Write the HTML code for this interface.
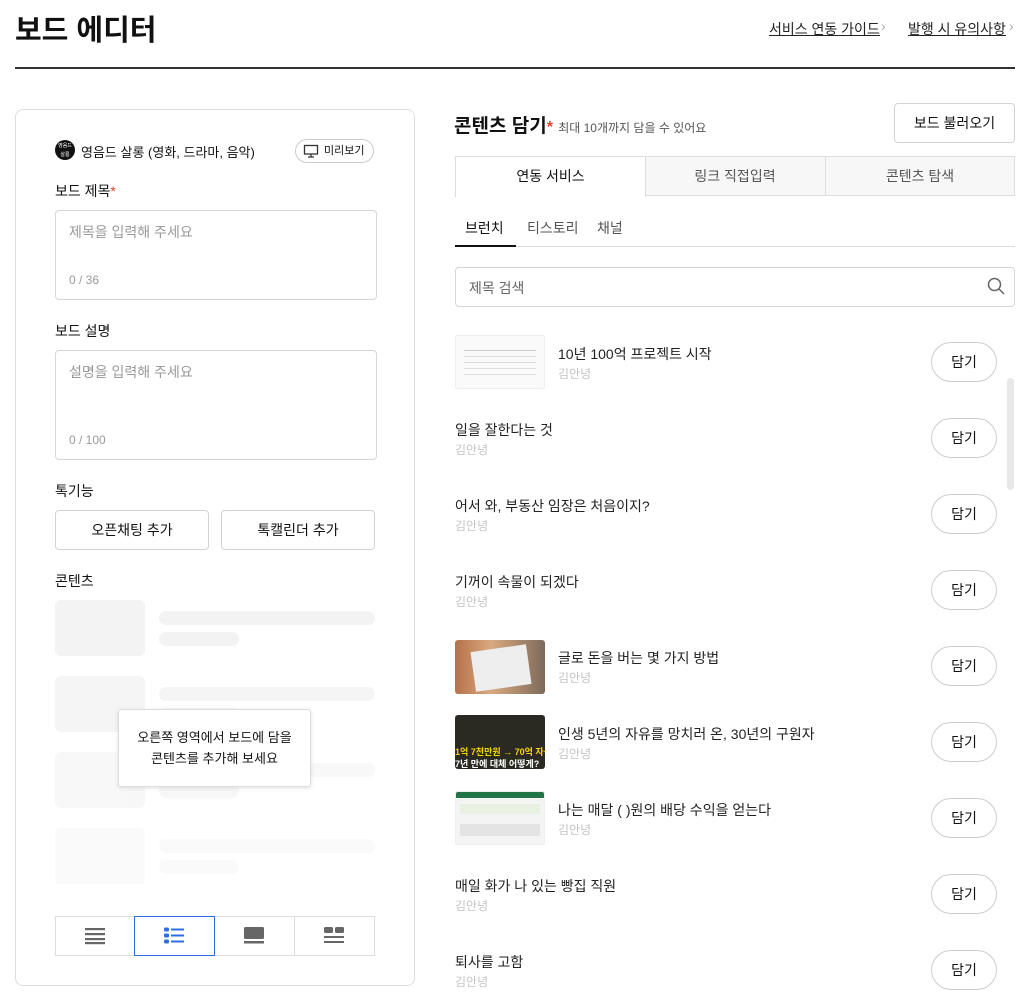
<!DOCTYPE html>
<html><head><meta charset="utf-8"><style>
*{box-sizing:border-box;margin:0;padding:0}
body{width:1024px;height:1006px;overflow:hidden;background:#fff;font-family:"Liberation Sans","Noto Sans CJK KR",sans-serif;color:#111;position:relative}
.a{position:absolute}
.sk{position:absolute;background:#f3f3f3;border-radius:6px}
.bar{position:absolute;background:#f3f3f3;border-radius:8px;height:14px}
.inp{position:absolute;border:1px solid #d6d6d6;border-radius:4px;background:#fff}
.btn{position:absolute;border:1px solid #d2d2d2;border-radius:4px;background:#fff;font-size:14px;text-align:center}
.dam{position:absolute;left:931px;width:66px;height:40px;border:1px solid #ccc;border-radius:20px;font-size:14px;text-align:center;line-height:38px}
.it{position:absolute;font-size:14px;color:#222}
.au{position:absolute;font-size:12px;color:#c4c4c4}
.th{position:absolute;left:455px;width:90px;height:54px;border-radius:3px;overflow:hidden}
</style></head><body>
<div class="a" style="left:15px;top:7px;font-size:29px;font-weight:bold">보드 에디터</div>
<div class="a" style="left:769px;top:19px;font-size:14px;text-decoration:underline;color:#222">서비스 연동 가이드</div>
<div class="a" style="left:881px;top:18px;font-size:14px;color:#aaa">›</div>
<div class="a" style="left:908px;top:19px;font-size:14px;text-decoration:underline;color:#222">발행 시 유의사항</div>
<div class="a" style="left:1009px;top:18px;font-size:14px;color:#aaa">›</div>
<div class="a" style="left:15px;top:67px;width:1000px;height:2px;background:#333"></div>

<div class="a" style="left:15px;top:109px;width:400px;height:877px;border:1px solid #ddd;border-radius:8px"></div>
<div class="a" style="left:55px;top:140px;width:20px;height:20px;border-radius:50%;background:#111;color:#fff;font-size:5px;text-align:center;line-height:9px;padding-top:2px">영음드<br>살롱</div>
<div class="a" style="left:81px;top:142px;font-size:13px">영음드 살롱 (영화, 드라마, 음악)</div>
<div class="a" style="left:295px;top:139px;width:79px;height:24px;border:1px solid #ccc;border-radius:12px;font-size:11px;line-height:22px;padding-left:28px">미리보기</div>
<svg class="a" style="left:303px;top:144px" width="16" height="14" viewBox="0 0 16 14"><rect x="1.5" y="1.5" width="13" height="8.5" fill="none" stroke="#333" stroke-width="1.3"/><path d="M8 10v3M5 13h6" stroke="#333" stroke-width="1.3"/></svg>
<div class="a" style="left:55px;top:181px;font-size:14px">보드 제목<span style="color:#e5412f">*</span></div>
<div class="inp" style="left:55px;top:210px;width:322px;height:90px"></div>
<div class="a" style="left:69px;top:222px;font-size:14px;color:#999">제목을 입력해 주세요</div>
<div class="a" style="left:69px;top:273px;font-size:12px;color:#999">0 / 36</div>
<div class="a" style="left:55px;top:321px;font-size:14px">보드 설명</div>
<div class="inp" style="left:55px;top:350px;width:322px;height:110px"></div>
<div class="a" style="left:69px;top:362px;font-size:14px;color:#999">설명을 입력해 주세요</div>
<div class="a" style="left:69px;top:433px;font-size:12px;color:#999">0 / 100</div>
<div class="a" style="left:55px;top:481px;font-size:14px">톡기능</div>
<div class="btn" style="left:55px;top:510px;width:154px;height:40px;line-height:38px">오픈채팅 추가</div>
<div class="btn" style="left:221px;top:510px;width:154px;height:40px;line-height:38px">톡캘린더 추가</div>
<div class="a" style="left:55px;top:571px;font-size:14px">콘텐츠</div>

<div class="sk" style="left:55px;top:600px;width:90px;height:56px"></div><div class="bar" style="left:159px;top:611px;width:216px"></div><div class="bar" style="left:159px;top:632px;width:80px"></div>
<div style="opacity:.8"><div class="sk" style="left:55px;top:676px;width:90px;height:56px"></div><div class="bar" style="left:159px;top:687px;width:216px"></div><div class="bar" style="left:159px;top:708px;width:80px"></div></div>
<div style="opacity:.6"><div class="sk" style="left:55px;top:752px;width:90px;height:56px"></div><div class="bar" style="left:159px;top:763px;width:216px"></div><div class="bar" style="left:159px;top:784px;width:80px"></div></div>
<div style="opacity:.4"><div class="sk" style="left:55px;top:828px;width:90px;height:56px"></div><div class="bar" style="left:159px;top:839px;width:216px"></div><div class="bar" style="left:159px;top:860px;width:80px"></div></div>
<div class="a" style="left:118px;top:709px;width:193px;height:78px;border:1px solid #ddd;border-radius:3px;background:#fff;box-shadow:0 1px 4px rgba(0,0,0,.12);font-size:13px;text-align:center;line-height:21px;padding-top:17px">오른쪽 영역에서 보드에 담을<br>콘텐츠를 추가해 보세요</div>

<div class="a" style="left:55px;top:916px;width:320px;height:40px;border:1px solid #ddd"></div>
<div class="a" style="left:134px;top:916px;width:1px;height:40px;background:#ddd"></div>
<div class="a" style="left:294px;top:916px;width:1px;height:40px;background:#ddd"></div>
<div class="a" style="left:134px;top:916px;width:81px;height:40px;border:1px solid #2d6fe0"></div>
<svg class="a" style="left:84px;top:926px" width="22" height="20"><g fill="#666"><rect x="1" y="2" width="20" height="2.2"/><rect x="1" y="7" width="20" height="2.2"/><rect x="1" y="12" width="20" height="2.2"/><rect x="1" y="16" width="20" height="2.2"/></g></svg>
<svg class="a" style="left:163px;top:926px" width="22" height="20"><g fill="#2d6fe0"><rect x="1" y="1.5" width="5" height="4" rx="1.5"/><rect x="1" y="7.5" width="5" height="4" rx="1.5"/><rect x="1" y="13.5" width="5" height="4" rx="1.5"/><rect x="8" y="2.5" width="13" height="2"/><rect x="8" y="8.5" width="13" height="2"/><rect x="8" y="14.5" width="13" height="2"/></g></svg>
<svg class="a" style="left:243px;top:926px" width="22" height="20"><g fill="#666"><rect x="1" y="1" width="20" height="12" rx="1.5"/><rect x="1" y="15" width="20" height="2.5"/></g></svg>
<svg class="a" style="left:323px;top:926px" width="22" height="20"><g fill="#666"><rect x="1" y="1" width="9" height="6" rx="1.5"/><rect x="12" y="1" width="9" height="6" rx="1.5"/><rect x="1" y="10" width="20" height="2"/><rect x="1" y="15" width="20" height="2"/></g></svg>

<div class="a" style="left:454px;top:111px;font-size:19px;font-weight:bold">콘텐츠 담기<span style="color:#e5412f;font-size:16px">*</span> <span style="font-size:12px;font-weight:normal;color:#555">최대 10개까지 담을 수 있어요</span></div>
<div class="btn" style="left:894px;top:103px;width:121px;height:40px;line-height:38px">보드 불러오기</div>
<div class="a" style="left:455px;top:156px;width:560px;height:40px;border-bottom:1px solid #ddd"></div>
<div class="a" style="left:645px;top:156px;width:370px;height:40px;background:#f7f7f7;border:1px solid #ddd"></div>
<div class="a" style="left:825px;top:156px;width:1px;height:40px;background:#ddd"></div>
<div class="a" style="left:455px;top:156px;width:191px;height:41px;background:#fff;border:1px solid #ddd;border-bottom:none;font-size:14px;text-align:center;line-height:38px">연동 서비스</div>
<div class="a" style="left:645px;top:156px;width:180px;font-size:14px;text-align:center;line-height:40px;color:#555">링크 직접입력</div>
<div class="a" style="left:825px;top:156px;width:190px;font-size:14px;text-align:center;line-height:40px;color:#555">콘텐츠 탐색</div>
<div class="a" style="left:455px;top:246px;width:560px;height:1px;background:#ddd"></div>
<div class="a" style="left:455px;top:245px;width:61px;height:2px;background:#111"></div>
<div class="a" style="left:465px;top:218px;font-size:14px">브런치</div>
<div class="a" style="left:527px;top:218px;font-size:14px;color:#555">티스토리</div>
<div class="a" style="left:597px;top:218px;font-size:14px;color:#555">채널</div>
<div class="inp" style="left:455px;top:267px;width:560px;height:40px"></div>
<div class="a" style="left:469px;top:278px;font-size:14px;color:#666">제목 검색</div>
<svg class="a" style="left:987px;top:277px" width="18" height="18"><circle cx="7.5" cy="7.5" r="6" fill="none" stroke="#666" stroke-width="1.5"/><path d="M12 12l5 5" stroke="#666" stroke-width="1.5"/></svg>
<div class="a" style="left:1007px;top:378px;width:7px;height:112px;background:#e8e8e8;border-radius:4px"></div>

<div class="th" style="top:335px;background:#fafafa;border:1px solid #eee"><div style="margin:14px 8px;height:1px;background:#ccc;box-shadow:0 6px #ddd,0 12px #ddd,0 18px #ddd,0 24px #ddd"></div></div>
<div class="it" style="left:558px;top:344px">10년 100억 프로젝트 시작</div><div class="au" style="left:558px;top:365px">김안녕</div><div class="dam" style="top:342px">담기</div>
<div class="it" style="left:455px;top:420px">일을 잘한다는 것</div><div class="au" style="left:455px;top:441px">김안녕</div><div class="dam" style="top:418px">담기</div>
<div class="it" style="left:455px;top:496px">어서 와, 부동산 임장은 처음이지?</div><div class="au" style="left:455px;top:517px">김안녕</div><div class="dam" style="top:494px">담기</div>
<div class="it" style="left:455px;top:572px">기꺼이 속물이 되겠다</div><div class="au" style="left:455px;top:593px">김안녕</div><div class="dam" style="top:570px">담기</div>
<div class="th" style="top:640px;background:linear-gradient(90deg,#b5714a,#d9a97f 40%,#7d6a5c)"><div style="margin:8px 18px;width:56px;height:40px;background:#eee;transform:rotate(-8deg)"></div></div>
<div class="it" style="left:558px;top:648px">글로 돈을 버는 몇 가지 방법</div><div class="au" style="left:558px;top:669px">김안녕</div><div class="dam" style="top:646px">담기</div>
<div class="th" style="top:715px;background:#2a2a22"><div style="position:absolute;left:0;top:30px;font-size:9px;font-weight:bold;color:#f5d400;white-space:nowrap">1억 7천만원 → 70억 자산가</div><div style="position:absolute;left:0;top:42px;font-size:9px;font-weight:bold;color:#fff;white-space:nowrap">7년 만에 대체 어떻게?</div></div>
<div class="it" style="left:558px;top:724px">인생 5년의 자유를 망치러 온, 30년의 구원자</div><div class="au" style="left:558px;top:745px">김안녕</div><div class="dam" style="top:722px">담기</div>
<div class="th" style="top:791px;background:#f4f4f4;border:1px solid #eee"><div style="height:6px;background:#217346"></div><div style="margin:6px 4px;height:10px;background:#e7f0e1"></div><div style="margin:10px 4px;height:12px;background:#e4e4e4"></div></div>
<div class="it" style="left:558px;top:800px">나는 매달 ( )원의 배당 수익을 얻는다</div><div class="au" style="left:558px;top:821px">김안녕</div><div class="dam" style="top:798px">담기</div>
<div class="it" style="left:455px;top:876px">매일 화가 나 있는 빵집 직원</div><div class="au" style="left:455px;top:897px">김안녕</div><div class="dam" style="top:874px">담기</div>
<div class="it" style="left:455px;top:952px">퇴사를 고함</div><div class="au" style="left:455px;top:973px">김안녕</div><div class="dam" style="top:950px">담기</div>
</body></html>
